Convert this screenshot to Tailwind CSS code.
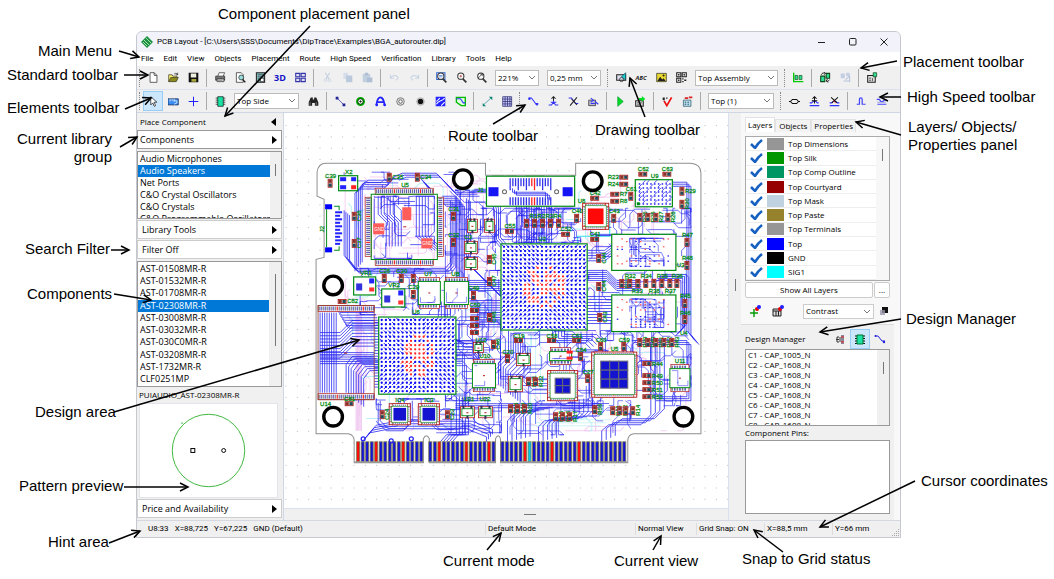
<!DOCTYPE html>
<html lang="en">
<head>
  <meta charset="UTF-8">
  <meta name="viewport" content="width=device-width, initial-scale=1.0">
  <title>PCB Layout</title>
  <script src="https://cdn.jsdelivr.net/npm/@tailwindcss/browser@4"></script>
</head>
<body class="bg-white text-black">

<figure class="relative min-h-screen pt-[31px] pr-[153px] pl-[136px] font-['Open_Sans','Noto_Sans',sans-serif] text-[8px] leading-3">

  <!-- Application window -->
  <div class="flex h-[507px] flex-col overflow-hidden rounded-t-md border border-[#c6c8d0] bg-[#f0f0f0]">

    <!-- Title bar -->
    <header class="flex h-5 shrink-0 items-center bg-[#f1f2fa] pl-1">
      <svg class="mr-1 h-3 w-3" viewBox="0 0 12 12"><path d="M6 0L12 6L6 12L0 6Z" fill="#1c9140"/><path d="M3 4l5 5M5 2l5 5M2 6l4 4" stroke="#a5dfb2"/></svg>
      <h1 class="font-[Roboto,sans-serif] text-[8px]">PCB Layout - [C:\Users\SSS\Documents\DipTrace\Examples\BGA_autorouter.dip]</h1>
      <div class="ml-auto flex items-center gap-[11px] pr-[6px]">
        <button class="flex w-5 justify-center" aria-label="Minimize"><svg class="h-2 w-2" viewBox="0 0 8 8"><path d="M0 4.500h7" stroke="#222"/></svg></button>
        <button class="flex w-5 justify-center" aria-label="Maximize"><svg class="h-2 w-2" viewBox="0 0 8 8"><rect x=".5" y=".5" width="6.500" height="6.500" rx="1" fill="none" stroke="#222"/></svg></button>
        <button class="flex w-5 justify-center" aria-label="Close"><svg class="h-2 w-2" viewBox="0 0 8 8"><path d="M.5 .5l7 7M7.500 .5l-7 7" stroke="#222"/></svg></button>
      </div>
    </header>

    <!-- Main menu -->
    <nav class="flex h-[14px] shrink-0 items-center gap-[10px] bg-white pl-1 font-[Roboto,sans-serif]">
      <a href="#">File</a>
      <a href="#">Edit</a>
      <a href="#">View</a>
      <a href="#">Objects</a>
      <a href="#">Placement</a>
      <a href="#">Route</a>
      <a href="#">High Speed</a>
      <a href="#">Verification</a>
      <a href="#">Library</a>
      <a href="#">Tools</a>
      <a href="#">Help</a>
    </nav>

    <!-- Toolbars, filled by the script -->
    <div id="toolbar1" class="flex h-6 shrink-0 items-center border-b border-[#dbe1ee]"></div>
    <div id="toolbar2" class="flex h-[23px] shrink-0 items-center border-b border-[#cfd6e4]"></div>

    <div class="flex min-h-0 flex-1">

      <!-- Component placement panel -->
      <aside class="flex w-[147px] shrink-0 flex-col border-r border-[#cfd6e4] pr-px pb-[2px]">
        <div class="flex h-[17px] shrink-0 items-center justify-between pr-[6px] pl-[3px]">
          <h2>Place Component</h2>
          <svg class="h-2 w-[5px]" viewBox="0 0 5 8"><path d="M5 0v8L0 4z"/></svg>
        </div>
        <button class="flex h-[19px] shrink-0 items-center justify-between border border-[#999] bg-white pr-1 pl-[2px] text-[9px]">Components<svg class="h-2 w-[5px]" viewBox="0 0 5 8"><path d="M0 0v8l5-4z"/></svg></button>
        <div class="mt-[2px] flex h-[68px] shrink-0 overflow-hidden border border-[#999] bg-white">
          <ul id="groups" class="flex-1 pt-px text-[9px] leading-3"></ul>
          <div class="w-3 bg-[#f0f0f0] pt-3"><div class="mx-auto h-3 w-px bg-[#777]"></div></div>
        </div>
        <button class="mt-px flex h-[19px] shrink-0 items-center justify-between border border-[#ccc] bg-white pr-1 pl-1 text-[9px]">Library Tools<svg class="h-2 w-[5px]" viewBox="0 0 5 8"><path d="M0 0v8l5-4z"/></svg></button>
        <button class="mt-px flex h-[19px] shrink-0 items-center justify-between border border-[#ccc] bg-white pr-1 pl-1 text-[9px]">Filter Off<svg class="h-2 w-[5px]" viewBox="0 0 5 8"><path d="M0 0v8l5-4z"/></svg></button>
        <div class="mt-[2px] flex h-[126px] shrink-0 overflow-hidden border border-[#999] bg-white">
          <ul id="parts" class="flex flex-1 flex-col justify-between py-px text-[9px] leading-3"></ul>
          <div class="w-3 bg-[#f0f0f0] pt-3"><div class="mx-auto h-[72px] w-px bg-[#777]"></div></div>
        </div>
        <p class="flex h-4 shrink-0 items-center pl-[2px] text-[8px]">PUIAUDIO_AST-02308MR-R</p>
        <div class="mr-1 ml-[2px] min-h-0 flex-1 border border-[#e2e4ea] bg-white">
          <svg class="h-full w-full" viewBox="0 0 140 92">
            <circle cx="70" cy="46" r="37" fill="none" stroke="#3db53d"/>
            <path d="M42 18h2" stroke="#3db53d"/>
            <rect x="52" y="44" width="4" height="4" fill="#fff" stroke="#000"/>
            <circle cx="85.500" cy="46" r="2" fill="#fff" stroke="#000"/>
          </svg>
        </div>
        <button class="mt-px flex h-[19px] shrink-0 items-center justify-between border border-[#ccc] bg-white pr-1 pl-1 text-[9px]">Price and Availability<svg class="h-2 w-[5px]" viewBox="0 0 5 8"><path d="M0 0v8l5-4z"/></svg></button>
      </aside>

      <!-- Design area -->
      <main class="flex min-w-0 flex-1 flex-col">
        <div class="min-h-0 flex-1 bg-white">
          <svg id="board" class="h-full w-full" viewBox="284 113 443 394"></svg>
        </div>
        <div class="flex h-3 items-center justify-center border-t border-[#dbe1ee] pl-12"><div class="h-px w-3 bg-[#777]"></div></div>
      </main>

      <div class="flex w-[13px] shrink-0 items-center justify-center border-l border-[#dbe1ee]"><div class="mb-16 h-3 w-px bg-[#777]"></div></div>

      <!-- Layers panel -->
      <aside class="flex w-[159px] shrink-0 flex-col bg-[#f8f8f8] pr-[10px] pl-[4px]">
        <div class="mt-[4px] flex h-[15px] shrink-0 items-end" role="tablist">
          <button role="tab" class="h-[15px] border border-b-0 border-[#e2e2e2] bg-white px-[2px]">Layers</button>
          <button role="tab" class="h-[13px] border border-b-0 border-[#e2e2e2] bg-[#f3f3f3] px-[3px]">Objects</button>
          <button role="tab" class="h-[13px] border border-b-0 border-[#e2e2e2] bg-[#f3f3f3] px-[2px]">Properties</button>
        </div>
        <div class="mt-1 flex h-[145px] shrink-0 border border-[#aaa] bg-white">
          <div id="layers" class="flex flex-1 flex-col"></div>
          <div class="w-[13px] bg-[#f7f7f7] pt-3"><div class="mx-auto h-3 w-px bg-[#777]"></div></div>
        </div>
        <div class="mt-px flex h-4 shrink-0 gap-px">
          <button class="flex-1 rounded-xs border border-[#ccc] bg-white">Show All Layers</button>
          <button class="w-4 rounded-xs border border-[#ccc] bg-white" aria-label="More layers">...</button>
        </div>
        <div class="flex h-[26px] shrink-0 items-center">
          <button class="flex w-5 justify-center" aria-label="Add layer"><svg class="h-3 w-3" viewBox="0 0 12 12"><path d="M5 4v8M1 8h8" stroke="#099a09" stroke-width="1.500"/><circle cx="8" cy="4" r="2" fill="#e00"/><circle cx="10" cy="2" r="2" fill="#22f"/></svg></button>
          <button class="ml-[3px] flex w-5 justify-center" aria-label="Layer setup"><svg class="h-3 w-3" viewBox="0 0 12 12"><path d="M1 4h8v7H1zM1 6h8M4 6v5M6.500 6v5" fill="#ddd" stroke="#222"/><circle cx="8" cy="4" r="2" fill="#e00"/><circle cx="10" cy="2" r="2" fill="#22f"/></svg></button>
          <div class="relative mr-1 ml-auto w-[71px]">
            <select aria-label="Layer view" class="block h-[15px] w-full appearance-none border border-[#ccc] bg-white pl-[2px] text-[8px]"><option>Contrast</option></select>
            <svg class="absolute top-[6px] right-1 h-[4px] w-[6px]" viewBox="0 0 6 4"><path d="M0 0l3 3l3-3" fill="none" stroke="#777"/></svg>
          </div>
          <button aria-label="Swap order"><svg class="h-3 w-3" viewBox="0 0 12 12"><path d="M4 2h6v6H4z" fill="#111"/><path d="M2 5h5v5H2z" fill="#99a" fill-opacity=".8"/></svg></button>
        </div>

        <!-- Design manager -->
        <div class="-mr-[4px] -ml-[4px] flex min-h-0 flex-1 flex-col border-t border-[#dcdcdc] bg-[#f0f0f0] pt-1 pr-[4px] pl-[4px]">
          <div class="flex h-5 shrink-0 items-center">
            <h2>Design Manager</h2>
            <button class="ml-auto flex h-5 w-5 items-center justify-center" aria-label="Nets"><svg class="h-[11px] w-[9px]" viewBox="0 0 9 11"><path d="M3 3H1v5h2M4 3v5M0 5.500h3" fill="none" stroke="#333"/><path d="M5 1h3v9H5z" fill="#889"/><path d="M5 3h3M5 8h3" stroke="#e22"/></svg></button>
            <button class="flex h-5 w-5 items-center justify-center border border-[#98cdf5] bg-[#cce6fb]" aria-label="Components list"><svg class="h-[11px] w-[10px]" viewBox="0 0 10 11"><path d="M0 2h10M0 4.500h10M0 7h10M0 9.500h10" stroke="#111"/><path d="M2 1h6v9H2z" fill="#19e3a4" stroke="#073"/></svg></button>
            <button class="flex h-5 w-5 items-center justify-center" aria-label="Traces"><svg class="h-3 w-3" viewBox="0 0 12 12"><path d="M1 3h3l4 5h3" fill="none" stroke="#22d"/><circle cx="1.500" cy="3" r="1" fill="#22d"/><circle cx="10" cy="9" r="1.200" fill="#22d"/></svg></button>
          </div>
          <div class="flex h-[77px] shrink-0 overflow-hidden border border-[#999] bg-white">
            <ul id="components" class="flex-1 text-[8px] leading-[10px]"></ul>
            <div class="w-3 bg-[#f0f0f0] pt-3"><div class="mx-auto h-3 w-px bg-[#777]"></div></div>
          </div>
          <h2 class="flex h-[14px] shrink-0 items-center">Component Pins:</h2>
          <div class="mb-[6px] flex-1 border border-[#999] bg-white"></div>
        </div>
      </aside>
    </div>

    <!-- Status bar -->
    <footer class="relative flex h-[17px] shrink-0 items-center border-t border-[#d5d8e0] font-[Roboto,sans-serif]">
      <div class="flex flex-1 gap-[6px] pl-[11px]"><span>U8:33</span><span>X=88,725</span><span>Y=67,225</span><span>GND (Default)</span></div>
      <span class="w-[150px] border-l border-[#ddd] pl-[2px]">Default Mode</span>
      <span class="w-[61px] border-l border-[#ddd] pl-[2px]">Normal View</span>
      <span class="w-[68px] border-l border-[#ddd] pl-[2px]">Grid Snap: ON</span>
      <span class="w-[68px] border-l border-[#ddd] pl-[2px]">X=88,5 mm</span>
      <span class="w-[68px] border-l border-[#ddd] pl-[2px]">Y=66 mm</span>
      <svg class="absolute right-0 bottom-0 h-2 w-2" viewBox="0 0 8 8"><path d="M6 0h1v1H6zM4 2h1v1H4zM6 2h1v1H6zM2 4h1v1H2zM4 4h1v1H4zM6 4h1v1H6zM0 6h1v1H0zM2 6h1v1H2zM4 6h1v1H4zM6 6h1v1H6z" fill="#aaa"/></svg>
    </footer>
  </div>

  <!-- Callouts -->
  <svg id="arrows" class="pointer-events-none absolute inset-0 h-full w-full" fill="none" stroke="#000" stroke-width="1.500"></svg>
  <figcaption id="callouts" class="pointer-events-none font-['Liberation_Sans',Arial,sans-serif] text-[15px] leading-[18px]"></figcaption>
</figure>

<script>
// ---------- icons (16 x 16) ----------
const net = '<path d="M1 3h4l6 8h4" fill="none" stroke="#33f" stroke-width="1.500"/><circle cx="2" cy="4" r="1.800" fill="#33f"/><circle cx="13" cy="12" r="1.800" fill="#33f"/>';
const lens = '<circle cx="7" cy="6" r="4.500" fill="#fff" stroke="#333" stroke-width="1.500"/><path d="M10 10l5 5" stroke="#333" stroke-width="2.500"/>';
const icons = {
  new: '<path d="M3 1h6l4 4v10H3z" fill="#fff" stroke="#222"/><path d="M9 1v4h4" fill="none" stroke="#222"/>',
  open: '<path d="M1 14V4h5l1 2h6v2" fill="#ffef70" stroke="#332"/><path d="M1 14l3-6h11l-3 6z" fill="#8c8a1c" stroke="#332"/><path d="M9 3c2-2 4-1 5 1M14 1v3h-3" fill="none" stroke="#222"/>',
  save: '<path d="M1 1h14v14H1z" fill="#111"/><path d="M4 2h8v6H4z" fill="#f0f0e0"/><path d="M5 10h7v4H5z" fill="#a9a63a"/>',
  print: '<path d="M4 6l2-5h8l-2 5" fill="#fff" stroke="#333"/><path d="M1 6h13v6H1z" fill="#777" stroke="#222"/><path d="M3 10h10v4H3z" fill="#eee" stroke="#222"/><path d="M4 12h7" stroke="#555"/>',
  preview: '<path d="M2 1h7l3 3v11H2z" fill="#fff" stroke="#222"/><circle cx="9" cy="8" r="3.500" fill="#9dd" stroke="#222"/><path d="M11 11l4 4" stroke="#222" stroke-width="2"/>',
  titles: '<path d="M2 1h12v14H2z" fill="#8bb" stroke="#222" stroke-width="1.500"/><path d="M4 4h8M4 7h8M4 10h3" stroke="#234"/><path d="M8 9h5v5H8z" fill="#fff" stroke="#222"/>',
  panel: '<path d="M1 2h6v5H1zM9 2h6v5H9zM1 9h6v5H1zM9 9h6v5H9z" fill="#dde" stroke="#33a" stroke-width="1.500"/>',
  cut: '<path d="M5 1l5 9M11 1L6 10" stroke="#c3d0e0" stroke-width="1.500"/><circle cx="5" cy="12" r="2" fill="none" stroke="#c3d0e0"/><circle cx="11" cy="12" r="2" fill="none" stroke="#c3d0e0"/>',
  copy: '<path d="M2 1h7v9H2z" fill="#d5deea"/><path d="M6 5h9v10H6z" fill="#bac9dc"/>',
  paste: '<path d="M1 3h11v12H1z" fill="#c3d0e0"/><path d="M4 1h5v4H4zM7 8h8v7H7z" fill="#aebfd6"/>',
  undo: '<path d="M2 4v5h5M2 9c3-5 9-5 11-1 0 2-1 3-3 4" fill="none" stroke="#c8d3e4" stroke-width="1.500"/>',
  redo: '<path d="M14 4v5H9M14 9C11 4 5 4 3 8c0 2 1 3 3 4" fill="none" stroke="#c8d3e4" stroke-width="1.500"/>',
  zoomWin: '<path d="M1 1h12v10H1z" fill="none" stroke="#36c" stroke-width="1.500"/>' + lens + '<path d="M4.500 5h5M4.500 7h5" stroke="#36c"/>',
  zoomIn: lens + '<path d="M5 6h4M7 4v4" stroke="#a33"/>',
  zoomOut: lens + '<path d="M3 9l6-6M9 6V3H6" stroke="#222" fill="none"/>',
  place: '<path d="M1 4h13v8H1z" fill="#dde" stroke="#222" stroke-width="1.500"/><circle cx="8" cy="11" r="3" fill="none" stroke="#222"/><path d="M8 7l6-6v11l-3-3z" fill="#2cc" stroke="#145"/>',
  picture: '<path d="M1 2h14v12H1z" fill="#eadb30" stroke="#222"/><path d="M2 13l4-6 3 4 2-2 3 4z" fill="#222"/><circle cx="11" cy="5" r="1.500" fill="#222"/>',
  qr: '<path d="M1 1h6v6H1zM9 1h6v6H9zM1 9h6v6H1z" fill="none" stroke="#222" stroke-width="1.500"/><path d="M3 3h2v2H3zM11 3h2v2h-2zM3 11h2v2H3zM9 9h2v2H9zM12 11h3v2h-3zM9 13h2v2H9z" fill="#222"/>',
  align: '<path d="M1 1v13h14" fill="none" stroke="#0c0" stroke-width="2"/><path d="M3 5h4v6H3zM9 5h4v6H9z" fill="#2ddc9a" stroke="#151"/>',
  swap: '<path d="M1 6h6v8H1zM9 2h5v7H9z" fill="#2ddc9a" stroke="#141" stroke-width="1.500"/><path d="M2 4c1-3 3-3 6-2M9 13c2 1 4 0 5-2M6 0l2 2-2 2M11 10l-2 3 3 2" fill="none" stroke="#111" stroke-width="1.200"/>',
  arrange: '<path d="M1 2h6v7H1zM9 1h5v5H9z" fill="#c3cee4"/><path d="M8 11l6-5v9M5 13h9" stroke="#b6c3dc" fill="none" stroke-width="1.500"/>',
  listPlace: '<path d="M1 5h11v10H1z" fill="#ddd" stroke="#222" stroke-width="1.500"/><path d="M3 9h3M3 12h3M8 9v4" stroke="#222"/><path d="M9 1h5v6H9z" fill="#2ddc9a" stroke="#141"/>',
  pointer: '<path d="M4 1v12l3-3 2 5 2-1-2-5h4z" fill="#fff" stroke="#111"/>',
  ruler: '<path d="M0 4h15v9H0z" fill="#3b8df0" stroke="#124"/><path d="M3 4v4M6 4v3M9 4v4" stroke="#fff"/><path d="M8 7h5v3l-4 2" stroke="#fff" fill="none"/>',
  origin: '<path d="M8 1v14M1 8h14" stroke="#22f" stroke-width="1.500"/>',
  chip: '<path d="M1 3h14M1 6h14M1 9h14M1 12h14" stroke="#111"/><path d="M4 1h8v14H4z" fill="#19e3a4" stroke="#111"/>',
  find: '<path d="M1 14V9l3-7h3v3h2V2h3l3 7v5h-5v-4H6v4z" fill="#222"/><path d="M3 9v4M12 9v4" stroke="#999"/>',
  ratline: '<path d="M3 3l10 10" stroke="#229" /><path d="M1 1h4v4H1zM11 11h4v4h-4z" fill="#229"/>',
  via: '<circle cx="8" cy="8" r="5" fill="#fff" stroke="#0a0" stroke-width="3"/><circle cx="8" cy="8" r="4" fill="none" stroke="#111"/><path d="M8 6v4M6 8h4" stroke="#111"/>',
  arc: '<path d="M2 13C3 5 6 2 8 2s5 4 6 11M4 9h9" fill="none" stroke="#22f" stroke-width="2.500"/><circle cx="2.500" cy="13" r="2" fill="#22f"/><circle cx="14" cy="13" r="2" fill="#22f"/>',
  hole: '<circle cx="8" cy="8" r="5.500" fill="#ddd" stroke="#555"/><circle cx="8" cy="8" r="2.500" fill="#fff" stroke="#333"/>',
  pad: '<circle cx="8" cy="8" r="5.500" fill="#ddd" stroke="#999"/><circle cx="8" cy="8" r="4" fill="#111"/>',
  pour: '<path d="M1 1h14v14H1z" fill="#22f"/><path d="M2 12c3-6 7-3 12-9M2 8l5-5M9 14l5-5" stroke="#fff" stroke-width="1.500" fill="none"/>',
  keepout: '<path d="M2 2h13v12H9L2 9z" fill="#dfd" stroke="#0b0" stroke-width="2"/><path d="M2 4h6l4 6h3" stroke="#33f" fill="none" stroke-width="1.500"/>',
  dim: '<path d="M2 13L13 3" stroke="#289"/><path d="M1 10v5h5zM10 1h5v5z" fill="#187"/>',
  table: '<path d="M1 1h13v14H1zM1 4.500h13M1 8h13M1 11.500h13M4.500 1v14M8 1v14M11.500 1v14" fill="#ccf" stroke="#226"/>',
  route: net,
  diff: '<path d="M8 6v4M1 13h4l3-4 3 4h4M4 9h8" stroke="#33f" fill="none" stroke-width="1.500"/><path d="M8 1v6M5 4l3-3 3 3" stroke="#222" fill="none" stroke-width="1.500"/>',
  unroute: '<path d="M1 3h4l6 8h4" fill="none" stroke="#33f" stroke-width="1.500"/><path d="M3 14L13 2M5 4l8 9" stroke="#222" stroke-width="1.500"/>',
  teardrop: '<path d="M1 6h10v8H1z" fill="#bbc" stroke="#222"/><path d="M4 3l4 3-4 3M4 11h6M10 8l5 4" stroke="#33f" fill="none" stroke-width="1.500"/>',
  run: '<path d="M4 1l8 7-8 7z" fill="#0d2" stroke="#093"/>',
  runSetup: '<path d="M1 7h11v8H1z" fill="#ddd" stroke="#222" stroke-width="1.500"/><path d="M3 10h7M3 13h4" stroke="#222"/><path d="M5 3h5V0l5 4.500-5 4V6H5z" fill="#0d2"/>',
  check: '<path d="M3 7l4 7 7-12" fill="none" stroke="#e11" stroke-width="2.500"/><path d="M1 3h3M6 3h2M1 5h3" stroke="#222" stroke-width="2"/>',
  checkList: '<path d="M2 6h11v9H2z" fill="#bde" stroke="#256"/><path d="M4 9h2M8 9h2M4 12h2M8 12h2" stroke="#256" stroke-width="1.500"/><path d="M4 3h5M10 2h5" stroke="#d22" stroke-width="2.500"/>',
  pair: '<path d="M0 8h2l3-3h6l3 3h2M2 8l3 3h6l3-3" fill="none" stroke="#111" stroke-width="1.500"/>',
  pairUp: '<path d="M1 10h3l2-2h4l2 2h2M1 14h14" fill="none" stroke="#33f" stroke-width="1.500"/><path d="M8 1v10M5 4l3-3 3 3M4 7h8" stroke="#111" fill="none" stroke-width="1.500"/>',
  pairCut: '<path d="M1 10h3l2-2h4l2 2h3M1 14h14" fill="none" stroke="#33f" stroke-width="1.500"/><path d="M3 2l9 8M13 2L4 10" stroke="#111" stroke-width="1.500"/><path d="M6 7l4 3" stroke="#e11"/>',
  meander: '<path d="M1 12h4V5c0-3 4-3 4 0v7h5" fill="none" stroke="#44f" stroke-width="1.800"/>',
  tune: '<path d="M1 5h4l2 3h3l2-2h3M2 12h13" fill="none" stroke="#44f" stroke-width="1.800"/><path d="M2 9h12" stroke="#77c"/>',
};

// ---------- toolbars ----------
// '|' separator, ':' grip that opens a group, [text, width class] drop-down, anything else a button
const row1 = [':', 'new', 'open', 'save', '|', 'print', 'preview', 'titles', '3D', 'panel', '|', 'cut', 'copy', 'paste', '|', 'undo', 'redo', '|',
  'zoomWin', 'zoomIn', 'zoomOut', ['221%', 'w-[44px]'], ['0,25 mm', 'w-[54px]'], ':', 'place', 'Abc', 'picture', 'qr', ['Top Assembly', 'w-[83px]'],
  ':', 'align', '|', 'swap', 'arrange', '|', 'listPlace'];
const row2 = [':', 'pointer', 'ruler', 'origin', '|', 'chip', ['Top Side', 'w-[65px]'], 'find', '|', 'ratline', 'via', 'arc', 'hole', 'pad', 'pour', 'keepout', '|',
  'dim', 'table', ':', 'route', 'diff', 'unroute', 'teardrop', '|', 'run', 'runSetup', '|', 'check', 'checkList', '|', ['Top (1)', 'w-[66px]'],
  ':', 'pair', 'pairUp', 'pairCut', '|', 'meander', 'tune'];

function toolbarItem(item) {
  if (item === '|') return '<span class="mx-[3px] h-[18px] w-px bg-[#aaa]"></span>';
  if (item === ':') return '<span class="mr-[3px] h-[18px] w-[3px] border-r border-dotted border-[#888]"></span>';
  if (Array.isArray(item)) {
    return `<span class="relative mr-1 ml-[4px] ${item[1]}">
      <select aria-label="${item[0]}" class="block h-4 w-full appearance-none border border-[#bbb] bg-white pl-[2px] text-[8px]"><option>${item[0]}</option></select>
      <svg class="absolute top-[6px] right-1 h-[4px] w-[6px]" viewBox="0 0 6 4"><path d="M0 0l3 3l3-3" fill="none" stroke="#777"/></svg>
    </span>`;
  }
  if (item === '3D') return '<button class="w-5 font-[\'Liberation_Sans\',sans-serif] text-[9px] font-bold text-[#1414c8]">3D</button>';
  if (item === 'Abc') return '<button class="w-5 font-[\'Liberation_Sans\',sans-serif] text-[6px] font-bold text-[#222] italic">ABC</button>';
  const state = item === 'pointer' ? 'border border-[#98cdf5] bg-[#cce6fb]' : '';
  return `<button aria-label="${item}" class="flex h-5 w-5 items-center justify-center ${state}"><svg class="h-[11px] w-[11px]" viewBox="0 0 16 16">${icons[item]}</svg></button>`;
}
document.getElementById('toolbar1').innerHTML = row1.map(toolbarItem).join('');
document.getElementById('toolbar2').innerHTML = row2.map(toolbarItem).join('');

// ---------- lists ----------
function fillList(id, items, selected) {
  document.getElementById(id).innerHTML = items.map(t =>
    `<li class="${t === selected ? 'bg-[#0078d7] pl-[2px] text-white' : 'pl-[2px]'} whitespace-nowrap">${t}</li>`).join('');
}
fillList('groups', ['Audio Microphones', 'Audio Speakers', 'Net Ports', 'C&amp;O Crystal Oscillators', 'C&amp;O Crystals', 'C&amp;O Programmable Oscillators'], 'Audio Speakers');
fillList('parts', ['AST-01508MR-R', 'AST-01532MR-R', 'AST-01708MR-R', 'AST-02308MR-R', 'AST-03008MR-R', 'AST-03032MR-R', 'AST-030C0MR-R', 'AST-03208MR-R', 'AST-1732MR-R', 'CLF0251MP'], 'AST-02308MR-R');
fillList('components', ['C1 - CAP_1005_N', 'C2 - CAP_1608_N', 'C3 - CAP_1608_N', 'C4 - CAP_1608_N', 'C5 - CAP_1608_N', 'C6 - CAP_1608_N', 'C7 - CAP_1608_N', 'C8 - CAP_1608_N']);

const layers = [['Top Dimensions', '#969696'], ['Top Silk', '#009600'], ['Top Comp Outline', '#009664'], ['Top Courtyard', '#960000'], ['Top Mask', '#c0d2e0'],
  ['Top Paste', '#96822d'], ['Top Terminals', '#969696'], ['Top', '#0000ff'], ['GND', '#000000'], ['SIG1', '#00ffff']];
document.getElementById('layers').innerHTML = layers.map(([name, color]) => `
  <label class="flex flex-1 items-center border-b border-[#eee]">
    <input type="checkbox" checked class="peer h-0 w-0 appearance-none">
    <svg class="invisible mr-1 ml-1 h-[10px] w-[13px] peer-checked:visible" viewBox="0 0 13 10"><path d="M1 5l4 4q3-5 7-8" fill="none" stroke="#1560c0" stroke-width="2.500"/></svg>
    <span class="mr-1 h-3 w-[17px]" style="background:${color}"></span>${name}
  </label>`).join('');

// ---------- board ----------
const BLUE = '#2222f0', GREEN = '#008c14', RED = '#b01818', GRAY = '#8f8f8f';
let out = '';
let seed = 11;
const rnd = () => (seed = (seed * 16807) % 2147483647) / 2147483647;
const line = (d, color = BLUE, w = 0.9, o = 1) => out += `<path d="${d}" fill="none" stroke="${color}" stroke-width="${w}" opacity="${o}"/>`;
const box = (x, y, w, h, fill, stroke = 'none', sw = 1) => out += `<rect x="${x}" y="${y}" width="${w}" height="${h}" fill="${fill}" stroke="${stroke}" stroke-width="${sw}"/>`;
const label = (x, y, t, vertical) => out += `<text x="${x}" y="${y}" fill="${GREEN}" stroke="${GREEN}" stroke-width=".25" font-size="6" font-family="Liberation Sans" ${vertical ? `transform="rotate(-90 ${x} ${y})"` : ''}>${t}</text>`;

// n parallel copies of one path
function bus(points, n, dx, dy, color = BLUE, w = 0.9, o = 0.85) {
  for (let i = 0; i < n; i++) line('M' + points.map(([x, y]) => `${x + dx * i} ${y + dy * i}`).join('L'), color, w, o);
}
// short traces that turn by 45 degrees
function scatter(x, y, w, h, n, color, sw = 0.8, o = 1) {
  const dirs = [[1, 0], [1, 1], [0, 1], [-1, 1], [-1, 0], [-1, -1], [0, -1], [1, -1]];
  for (let i = 0; i < n; i++) {
    let px = x + rnd() * w, py = y + rnd() * h, k = Math.floor(rnd() * 4) * 2;
    let d = `M${px.toFixed(1)} ${py.toFixed(1)}`;
    for (let s = 0; s < 4; s++) {
      const len = k % 2 ? 2 + rnd() * 4 : 5 + rnd() * 22;
      px = Math.min(x + w, Math.max(x, px + dirs[k][0] * len));
      py = Math.min(y + h, Math.max(y, py + dirs[k][1] * len));
      d += `L${px.toFixed(1)} ${py.toFixed(1)}`;
      k = (k + (rnd() < 0.5 ? 1 : 7)) % 8;
    }
    line(d, color, sw, o);
  }
}
// two-pad part, standing (v) or lying
function part(x, y, v, name, side) {
  const w = v ? 4 : 8, h = v ? 8 : 4;
  box(x - w / 2, y - h / 2, w, h, '#c9b0a0', RED, 0.8);
  if (v) { box(x - 1.5, y - 3.5, 3, 3, '#8a2f2a'); box(x - 1.5, y + 0.5, 3, 3, '#1d4a5c'); }
  else { box(x - 3.5, y - 1.5, 3, 3, '#8a2f2a'); box(x + 0.5, y - 1.5, 3, 3, '#1d4a5c'); }
  if (name) side === 'r' ? label(x + w / 2 + 1, y + 2, name) : side === 'v' ? label(x + w / 2 + 5, y + 5, name, true) : label(x - 5, y - h / 2 - 1, name);
}
// pins along a strip
function pins(x, y, w, h, horizontal, pitch = 2) {
  box(x, y, w, h, '#fff', RED, 0.7);
  const n = Math.floor((horizontal ? w : h) / pitch);
  for (let i = 0; i < n; i++) {
    const c = i % 13 === 9 ? '#e22' : i % 2 ? '#55b' : '#778';
    horizontal ? box(x + 0.5 + i * pitch, y + 1, pitch * 0.6, h - 2, c) : box(x + 1, y + 0.5 + i * pitch, w - 2, pitch * 0.6, c);
  }
}
function so(x, y, w, h, pitch = 2.6) {
  pins(x + 1, y, w - 2, 5, true, pitch);
  pins(x + 1, y + h - 5, w - 2, 5, true, pitch);
  box(x, y + 4, w, h - 8, '#fff', GREEN, 1);
  scatter(x + 2, y + 6, w - 4, h - 12, 2, BLUE, 0.7, 0.7);
  box(x + w / 2 - 1, y + h / 2 - 0.5, 2, 1, RED);
}
function qfn(x, y, s, cells, cellColor = '#1414d0') {
  box(x, y, s, s, '#fff', RED, 0.9);
  pins(x + 3, y, s - 6, 3, true); pins(x + 3, y + s - 3, s - 6, 3, true);
  pins(x, y + 3, 3, s - 6, false); pins(x + s - 3, y + 3, 3, s - 6, false);
  box(x + 2.5, y + 2.5, s - 5, s - 5, '#fff', GREEN, 0.6);
  const pad = s * (cells === 2 ? 0.25 : 0.2), step = (s - pad * 2) / cells;
  for (let i = 0; i < cells; i++) for (let j = 0; j < cells; j++)
    box(x + pad + i * step, y + pad + j * step, step, step, cellColor, cells > 1 ? '#6a6a70' : 'none', 1);
}
function bga(x, y, w, h, n, rx, ry) {
  box(x, y, w, h, '#fff', GREEN, 1.2);
  const p = (w - 6) / (n - 1), q = (h - 6) / (n - 1), cx = x + w / 2, cy = y + h / 2;
  for (let i = 0; i < n; i++) for (let j = 0; j < n; j++) {
    const px = x + 3 + i * p, py = y + 3 + j * q;
    const dist = Math.hypot((px - cx) / rx, (py - cy) / ry);
    const near = dist < 1 && rnd() < 0.8 - dist * 0.3;
    const color = near ? '#ff2a2a' : '#0a0af5';
    if (rnd() < 0.6) line(`M${px} ${py}l${px < cx ? -p / 2 : p / 2} ${py < cy ? -q / 2 : q / 2}`, color, 0.9);
    out += `<circle cx="${px.toFixed(1)}" cy="${py.toFixed(1)}" r="1.150" fill="${color}"/>`;
  }
}

// grid
for (let y = 125; y < 507; y += 11.3) for (let x = 285.5; x < 727; x += 11.3) box(x.toFixed(1), y.toFixed(1), 1, 1, '#bbb');

// outline
const outline = 'M317 172Q318 163 326 163H485V175H575V163H690Q700 164 700 173V433H633Q627 434 627 440V462H500V438Q498 432 495 438V462H429V438Q426 432 423 438V462H354V440Q354 434 348 433H316V259L324 257V199L317 196Z';
out += `<path d="${outline}" fill="#fff" stroke="${GRAY}"/>`;

// inner layers, faint
scatter(345, 175, 340, 255, 170, '#f3c4f0', 1, 0.8);
scatter(345, 175, 340, 255, 35, '#a9ecf2', 1, 0.8);
bus([[356, 312], [356, 430]], 5, 1.3, 0, '#eec6ee', 1.3);
bus([[447, 180], [447, 300]], 6, 4, 0, '#f6d4f4', 1);
bus([[456, 330], [456, 425]], 3, 3, 0, '#c8f2f6', 1);
bus([[520, 190], [520, 240]], 5, 9, 0, '#f4d0f2', 1);
bus([[530, 332], [530, 425], [600, 425]], 3, 5, -3, '#c8f2f6', 1);
line('M609 207V236H577V330', '#35e0ea', 1);

// main buses
bus([[362, 262], [362, 184], [368, 180], [390, 180], [396, 175]], 5, -1.8, 2.2);
bus([[344, 210], [344, 255], [354, 268], [445, 268], [450, 262], [450, 200]], 4, 1.8, 1.6);
bus([[395, 176], [402, 173], [436, 173], [454, 192], [475, 192]], 3, 2, 2);
bus([[420, 178], [438, 196], [456, 196], [456, 280], [500, 280]], 6, 1.6, 2);
bus([[466, 198], [466, 262], [500, 296]], 3, 2, 1.5);
bus([[468, 192], [488, 192], [494, 210], [494, 240], [500, 247]], 4, 2, -1);
bus([[470, 300], [500, 300]], 12, 0, 2.4);
bus([[320, 312], [320, 392]], 8, 2.3, 0);
bus([[374, 312], [340, 312], [336, 308]], 7, 1.5, 2.6);
bus([[374, 320], [352, 320], [340, 332], [320, 332]], 9, 0, 3.2);
bus([[374, 352], [320, 352]], 6, 0, 2.2);
bus([[374, 356], [352, 356], [346, 364], [346, 392]], 8, 2.5, 2);
bus([[374, 322], [392, 322]], 24, 0, 2.8);
bus([[586, 250], [604, 250], [612, 244], [650, 244]], 5, 0, 2.6);
bus([[586, 270], [606, 270], [616, 280], [640, 280]], 6, 0, 2);
bus([[586, 296], [611, 296]], 10, 0, 3);
bus([[650, 182], [686, 182], [686, 330], [694, 340]], 3, 2, 2);
bus([[635, 344], [690, 344], [690, 400], [655, 400]], 3, -2, -2);
bus([[655, 280], [680, 280], [680, 330], [674, 336]], 4, 1.8, -2);
bus([[516, 200], [516, 243]], 15, 2.5, 0);
bus([[508, 330], [508, 352], [498, 362], [498, 384]], 10, 2.4, 2);
bus([[552, 330], [552, 342], [584, 342], [590, 348]], 5, 3, -2);
bus([[438, 300], [438, 332], [455, 340]], 5, 3, 1);
bus([[455, 340], [472, 340], [480, 350]], 7, 0, 3);
bus([[362, 441], [370, 432], [390, 428], [466, 428], [486, 436], [486, 441]], 4, 2, -2.5);
bus([[380, 400], [380, 420], [388, 428], [405, 428], [412, 420], [412, 400]], 2, -2, 2);
bus([[440, 441], [446, 434], [456, 434], [456, 396]], 5, 3, 0);
bus([[507, 441], [507, 420], [515, 412], [530, 412]], 6, 4.5, -1);
bus([[538, 441], [538, 426], [544, 420], [568, 420], [574, 414], [574, 400]], 5, 4.5, -1);
bus([[601, 441], [601, 430], [608, 424], [640, 424], [650, 414], [650, 345]], 4, 4.5, -2);
bus([[455, 403], [600, 403]], 3, 0, 2);
scatter(480, 208, 100, 34, 55, BLUE, 0.8, 0.8);
scatter(590, 208, 100, 26, 26, BLUE, 0.8, 0.8);
scatter(445, 190, 50, 80, 26, BLUE, 0.8, 0.8);
scatter(445, 270, 55, 130, 65, BLUE, 0.8, 0.8);
scatter(500, 330, 190, 75, 90, BLUE, 0.8, 0.8);
scatter(376, 398, 125, 34, 34, BLUE, 0.8, 0.8);
scatter(500, 400, 130, 34, 24, BLUE, 0.8, 0.7);
scatter(588, 235, 100, 105, 44, BLUE, 0.8, 0.8);
scatter(360, 268, 90, 46, 28, BLUE, 0.8, 0.8);
scatter(344, 172, 110, 18, 8, BLUE, 0.8, 0.8);

// edge connector
for (let i = 0; i < 60; i++) {
  if (i === 15 || i === 31) continue;
  const x = 356.5 + i * 4.5;
  box(x, 441, 3, 20, i === 38 ? '#00c8f0' : [0, 4, 10, 18, 24, 29, 37, 43, 49].includes(i) ? '#ff0a0a' : '#1414d8', '#77754a', 0.8);
}
box(354.5, 460.5, 69, 1.5, '#999'); box(429, 460.5, 66, 1.5, '#999'); box(500, 460.5, 127, 1.5, '#999');

// U5
box(366, 190, 76, 74, '#fff');
scatter(374, 196, 60, 62, 20, '#f3c4f0', 1, 0.8);
scatter(374, 196, 60, 62, 22, BLUE, 0.8, 0.9);
bus([[378, 196], [378, 214], [386, 222], [386, 246]], 6, 3, 0);
bus([[416, 196], [416, 236], [432, 250]], 5, 3, 0);
pins(375, 188, 58, 6, true); pins(375, 259, 58, 6, true);
pins(365, 197, 6, 59, false); pins(437, 197, 6, 59, false);
out += `<path d="M371 194H437V259H371Z" fill="none" stroke="${GREEN}"/>`;
box(402, 207, 9, 13, '#ff5c5c');
box(373, 223, 11, 11, '#ff5c5c'); box(421, 238, 11, 10, '#ff5c5c');
out += '<text x="374" y="230.500" font-size="4.500" fill="#fff" font-family="Liberation Sans">GND</text><text x="422" y="245" font-size="4.500" fill="#fff" font-family="Liberation Sans">GND</text>';
box(403, 226, 3, 1, RED); label(401, 187, 'U5');

// left connector
box(325, 204, 7, 5, '#00f'); box(325, 247, 7, 5, '#00f');
line('M326.500 209V247M334 206h5v4M334 250h5v-4', GREEN, 1);
for (let i = 0; i < 10; i++) box(335, 211 + i * 3.5, i % 2 ? 5 : 7, 2, '#22f');
label(324, 232, 'J2', true);

// J1
box(486, 176, 88, 30, '#fff', GREEN, 1.2);
box(488, 187, 10, 9, '#1414f5'); box(562, 187, 10, 9, '#1414f5');
for (let i = 0; i < 16; i++) {
  const c = i === 8 || i === 9 ? '#f22' : '#3333e8';
  box(509 + i * 2.7, 178, 1.3, i % 3 ? 8 : 12, c); box(509 + i * 2.7, 197, 1.3, 8, c);
}
bus([[512, 188], [512, 192], [545, 192], [545, 197]], 3, 2, 1.5);
out += '<circle cx="504" cy="191.500" r="2" fill="none" stroke="#666"/><circle cx="556" cy="191.500" r="2" fill="none" stroke="#666"/>';
label(477, 192, 'J1');

// big ball grids
bga(500.5, 243.5, 86, 86, 20, 22, 21); label(538, 241, 'U2');
bga(378.5, 316.5, 77, 77, 18, 17, 22); label(412, 313, 'U6');

// U14
pins(318, 305, 56, 6, true); pins(318, 393, 56, 6, true);
line('M318 305H374V399H318Z', '#8d3a30', 0.8); box(344, 352, 3, 1, RED); label(320, 405, 'U14');

// memories
[[611, 234, 64, 36], [611, 294.5, 64, 36.5]].forEach(([x, y, w, h]) => {
  box(x, y, w, h, '#fff');
  scatter(x + 18, y + 4, w - 30, h - 8, 20, BLUE, 0.7, 0.8);
  for (let r = 0; r < 2; r++) for (let i = 0; i < 12; i++) for (let j = 0; j < 5; j++) {
    const px = x + 5 + i * 4.6, py = y + 4 + r * 17 + j * 2.6, outer = i < 3 || i > 8;
    if (rnd() < (outer ? 0.35 : 0.75)) box(px, py, 1.6, 1.2, rnd() < (outer ? 0.9 : 0.25) ? '#f55' : BLUE);
  }
  out += `<rect x="${x}" y="${y}" width="${w}" height="${h}" fill="none" stroke="${GREEN}" stroke-width="1.200"/>`;
});
label(676, 267, 'U3'); label(679, 334, 'U4');

// U9
box(634.500, 179.500, 37, 27, '#fff', GREEN, 1.2);
for (let i = 0; i < 9; i++) for (let j = 0; j < 6; j++) {
  const x = 638 + i * 3.8, y = 183 + j * 4;
  box(x, y, 1.5, 1.5, BLUE); if (rnd() < 0.6) line(`M${x} ${y}l3 -3`, BLUE, 0.8);
}
box(636, 202, 3, 3, GREEN); label(650, 178, 'U9');

// U8
qfn(582, 203, 26, 1, '#ff0808'); label(577, 203, 'U8');

// crystals and regulators
box(338.500, 175.500, 19, 15, '#fff', GREEN, 1.2);
box(340, 177, 6, 4, '#22f'); box(351, 177, 5, 4, '#22f'); box(340, 185, 6, 4, '#22f'); box(351, 185, 5, 4, '#f22'); label(345, 174, 'X2');
box(353.500, 276.500, 22, 18, '#fff', GREEN, 1.2);
box(356, 283, 6, 7, '#33d'); box(369, 278, 5, 5, '#22f'); box(369, 287, 5, 4, '#f33'); label(360, 275, 'VR1');
box(381.500, 288.500, 23, 18, '#fff', GREEN, 1.2);
box(384, 295, 6, 7, '#33d'); box(398, 290, 5, 5, '#22f'); box(398, 300, 5, 4, '#f33'); label(388, 287, 'VR2');

// small chips
so(418, 277, 22, 31); label(424, 276, 'U7');
so(444, 277, 24, 31); label(451, 276, 'UB');
so(472, 359, 23, 32); label(479, 357, 'U10');
so(669, 364, 20, 27); label(674, 362, 'U11');
so(549, 347, 22, 17, 3.2);
box(566, 350, 6, 3, '#f22'); box(566, 356, 6, 3, '#f22');
qfn(547, 370, 30, 2); qfn(591, 351.500, 45, 3);
qfn(389, 403, 21, 1); qfn(418, 403, 21, 1); label(395, 401, 'IC4'); label(424, 401, 'IC3'); label(610, 350, 'U5');
[[467, 219, 10, 13], [484, 219, 10, 13], [464, 241, 13, 12], [464, 257, 13, 12], [460, 406, 14, 11], [478, 406, 14, 11], [516, 353, 14, 12], [508, 376, 14, 15], [473, 342, 10, 10]].forEach(([x, y, w, h]) => {
  box(x, y, w, h, '#fff', RED, 0.8);
  box(x + 1.5, y + 2, w - 3, h - 4, '#fff', GREEN, 0.9);
  box(x + 2, y - 1, 2, 3, '#335'); box(x + w - 4, y - 1, 2, 3, '#335'); box(x + w / 2 - 1, y + h - 2, 2, 3, '#335'); box(x + w / 2 - 1, y + h / 2, 2, 1, RED);
});
label(463, 400, 'U21'); label(479, 400, 'U22'); label(464, 239, 'C3'); label(475, 341, 'U12');

// two-pad parts
[[330, 183, 1, 'C39', 't'], [389, 177, 1, 'C35', 'r'], [417, 177, 1, 'C34', 'r'], [354, 216, 1, 'C36', 'v'], [354, 243, 1, 'C37', 'v'],
  [453, 216, 1, 'C31', 't'], [453, 242, 1, 'C32', 't'], [384, 278, 1, 'C28', 't'], [401, 278, 1, 'C30', 't'], [413, 278, 1, '', ''], [413, 294, 1, 'C29', 't'],
  [342, 301, 0, 'C82', 'r'], [349, 403, 0, 'C81', ''], [489, 259, 1, 'C45', 'v'], [489, 281, 1, 'C47', 'v'], [473, 295, 1, 'C49', 't'],
  [474, 310, 0, 'C50', ''], [474, 318, 0, '', ''], [474, 325, 0, '', ''], [474, 332, 0, '', ''], [489, 317, 1, 'C48', 'v'], [493, 344, 1, 'C46', 'v'], [507, 358, 1, 'C20', 't'],
  [382, 414, 1, 'C24', 'v'], [447, 414, 1, 'C23', 'v'], [509, 231, 0, 'C55', ''], [565, 234, 0, 'C52', ''], [594, 198, 0, 'C42', ''], [576, 218, 1, 'C40', 't'], [613, 218, 1, 'C43', 't'], [594, 239, 0, 'C41', ''],
  [526, 223, 1, '', ''], [534, 223, 1, 'R1', 't'], [542, 223, 1, 'R2', 't'], [550, 223, 1, 'R3', 't'], [558, 223, 1, 'R4', 't'],
  [623, 177, 0, '', ''], [623, 184, 0, '', ''], [614, 194, 0, 'R7', 'r'], [614, 201, 0, 'R8', 'r'], [642, 174, 0, 'C62', ''], [666, 174, 0, 'C63', ''], [630, 196, 1, 'C61', 't'], [681, 191, 1, 'R29', 'r'], [681, 204, 1, 'R30', 'v'],
  [639, 217, 1, 'R25', 'v'], [647, 217, 1, 'R26', 'v'], [655, 217, 1, 'R27', 'v'], [667, 217, 1, 'R28', 'v'], [686, 242, 1, 'R47', 't'], [686, 265, 1, 'R48', 't'], [598, 258, 1, 'C44', 'v'], [598, 286, 1, 'C44', 'v'], [599, 317, 1, 'C43', 'v'],
  [621, 283, 1, 'R31', 'v'], [629, 283, 1, 'R32', 't'], [637, 283, 1, '', ''], [645, 283, 1, 'R34', 't'], [653, 283, 1, '', ''], [661, 283, 1, 'R35', 't'], [669, 283, 1, '', ''], [676, 283, 1, 'R36', 't'],
  [684, 303, 1, 'R45', 't'], [684, 319, 1, 'R46', 't'], [518, 340, 0, 'C19', ''], [551, 340, 0, 'C58', ''], [576, 340, 0, 'C51', ''], [580, 356, 1, 'C54', 't'], [600, 346, 1, 'C60', 't'], [623, 346, 1, 'C59', 't'],
  [639, 342, 1, 'R39', 'v'], [647, 342, 1, 'R40', 'v'], [655, 342, 1, 'R41', 'v'], [663, 342, 1, 'R42', 'v'], [671, 342, 1, 'R43', 'v'], [646, 363, 0, 'R44', 'r'], [646, 375, 0, 'R49', 'r'], [646, 382, 0, 'R50', 'r'], [646, 389, 0, 'R51', 'r'], [646, 396, 0, 'R52', 'r'],
  [587, 378, 1, 'C27', 't'], [528, 381, 1, 'R21', 'v'], [535, 381, 1, 'R22', 'v'], [510, 408, 1, 'R18', 'v'], [517, 408, 1, 'R19', 'v'], [524, 408, 1, 'R20', 'v'], [555, 416, 1, 'R15', 'v'], [562, 416, 1, 'R16', 'v'], [569, 416, 1, 'R17', 'v'],
  [594, 409, 1, 'R56', 'v'], [612, 410, 1, 'R11', 'v'], [619, 410, 1, 'R12', 'v'], [625, 410, 1, '', ''], [632, 410, 1, 'R14', 'v']
].forEach(p => part(...p));
label(607, 179, 'R23'); label(607, 186, 'R24'); label(631, 293, 'R33'); label(648, 293, 'R38'); label(664, 293, 'R37');

// mounting holes
[[462.5, 179], [592, 181], [333, 285], [333, 416], [682.5, 416]].forEach(([x, y]) => out += `<circle cx="${x}" cy="${y}" r="9.300" fill="#fff" stroke="#000" stroke-width="3.400"/>`);
[[363, 438], [391, 440], [411, 438]].forEach(([x, y]) => out += `<circle cx="${x}" cy="${y}" r="2" fill="none" stroke="${BLUE}" stroke-width="1.200"/>`);
document.getElementById('board').innerHTML = out;

// ---------- callouts ----------
const callouts = [
  ['Component placement panel', 'top-[5px] left-[218px]', [310, 26, 225, 116]],
  ['Main Menu', 'top-[42px] left-[38px]', [119, 51, 139, 57]],
  ['Standard toolbar', 'top-[66px] left-[7px]', [124, 75, 148, 75]],
  ['Elements toolbar', 'top-[99px] left-[7px]', [125, 109, 151, 98]],
  ['Current library<br>group', 'top-[130px] left-[17px] text-right', [120, 147, 137, 137]],
  ['Search Filter', 'top-[240px] left-[25px]', [111, 250, 129, 250]],
  ['Components', 'top-[285px] left-[27px]', [114, 294, 151, 300]],
  ['Design area', 'top-[403px] left-[35px]', [114, 412, 359, 340]],
  ['Pattern preview', 'top-[477px] left-[19px]', [124, 487, 188, 487]],
  ['Hint area', 'top-[533px] left-[48px]', [109, 543, 140, 531]],
  ['Current mode', 'top-[552px] left-[443px]', [487, 550, 501, 533]],
  ['Current view', 'top-[552px] left-[614px]', [653, 550, 661, 536]],
  ['Snap to Grid status', 'top-[550px] left-[742px]', [783, 552, 754, 530]],
  ['Cursor coordinates', 'top-[472px] left-[921px]', [915, 481, 820, 527]],
  ['Design Manager', 'top-[310px] left-[906px]', [901, 319, 820, 332]],
  ['Layers/ Objects/<br>Properties panel', 'top-[118px] left-[908px]', [901, 135, 856, 122]],
  ['High Speed toolbar', 'top-[88px] left-[907px]', [901, 97, 880, 97]],
  ['Placement toolbar', 'top-[53px] left-[903px]', [897, 61, 861, 68]],
  ['Route toolbar', 'top-[127px] left-[448px]', [493, 124, 525, 105]],
  ['Drawing toolbar', 'top-[121px] left-[595px]', [645, 117, 630, 78]],
];
document.getElementById('callouts').innerHTML = callouts.map(([text, place]) => `<span class="absolute whitespace-nowrap ${place}">${text}</span>`).join('');
document.getElementById('arrows').innerHTML = callouts.map(([, , [x1, y1, x2, y2]]) => {
  const angle = Math.atan2(y2 - y1, x2 - x1) * 180 / Math.PI;
  return `<path d="M${x1} ${y1}L${x2} ${y2}"/><path d="M-8 -4L0 0L-8 4" transform="translate(${x2} ${y2}) rotate(${angle.toFixed(1)})"/>`;
}).join('');
</script>
</body>
</html>
